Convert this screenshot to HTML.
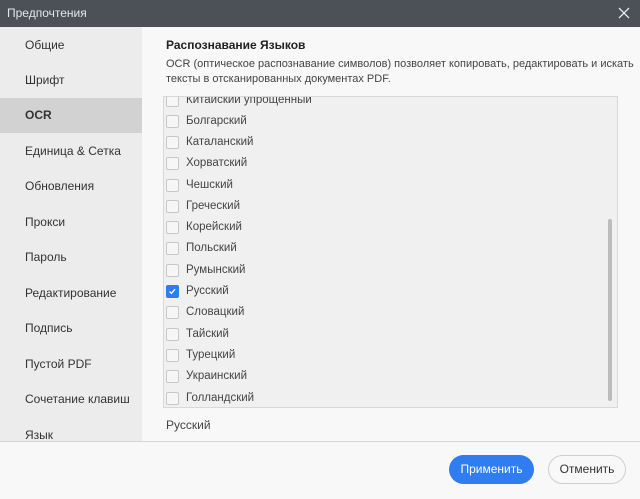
<!DOCTYPE html>
<html><head><meta charset="utf-8"><style>
*{margin:0;padding:0;box-sizing:border-box}
body{width:640px;height:499px;overflow:hidden;background:#f8f8f8;font-family:"Liberation Sans",sans-serif;color:#333;position:relative}
.title{position:absolute;left:0;top:0;width:640px;height:27px;background:#4c5158;color:#e4e6e8;font-size:12px;line-height:27px;padding-left:7px}
.x{position:absolute;right:10px;top:7px;width:12px;height:12px}
.side{position:absolute;left:0;top:27px;width:142px;height:414px;background:#ececec;overflow:hidden}
.si{position:absolute;left:0;width:142px;height:35px;font-size:12px;line-height:35px;padding-left:25px;color:#333}
.si.sel{background:#d2d2d2;font-weight:bold}
.h{position:absolute;left:166px;top:38px;font-size:12px;font-weight:bold;color:#222}
.d{position:absolute;left:166px;top:57px;font-size:11px;line-height:15px;color:#444;white-space:nowrap}
.box{position:absolute;left:163px;top:96px;width:455px;height:312px;background:#f0f0f0;border:1px solid #d8d8d8;overflow:hidden}
.it{position:absolute;left:0;height:21px;font-size:11.5px;line-height:21px;padding-left:22px;color:#444}
.cb{position:absolute;left:2px;top:4px;width:13px;height:13px;border:1px solid #c8c8cc;border-radius:2px;background:#f6f6f6}
.cb.on{background:#2d7cf0;border-color:#2d7cf0}
.sb{position:absolute;left:444px;top:122px;width:4px;height:182px;background:#bcbcbc;border-radius:2px}
.cur{position:absolute;left:166px;top:418px;font-size:12px;color:#444}
.foot{position:absolute;left:0;top:441px;width:640px;height:58px;background:#f8f8f8;border-top:1px solid #d4d4d4}
.b1{position:absolute;left:449px;top:455px;width:85px;height:29px;border-radius:15px;background:#2f7df0;color:#fff;font-size:12px;text-align:center;line-height:29px}
.b2{position:absolute;left:548px;top:455px;width:78px;height:29px;border-radius:15px;border:1px solid #cfcfcf;background:#f8f8f8;color:#333;font-size:12px;text-align:center;line-height:27px}
</style></head><body>
<div class="title">Предпочтения<svg class="x" viewBox="0 0 12 12"><path d="M1 1L11 11M11 1L1 11" stroke="#e4e6e8" stroke-width="1.3"/></svg></div>
<div class="side">
<div class="si" style="top:0.5px">Общие</div>
<div class="si" style="top:36px">Шрифт</div>
<div class="si sel" style="top:71px">OCR</div>
<div class="si" style="top:107px">Единица &amp; Сетка</div>
<div class="si" style="top:142px">Обновления</div>
<div class="si" style="top:178px">Прокси</div>
<div class="si" style="top:213px">Пароль</div>
<div class="si" style="top:249px">Редактирование</div>
<div class="si" style="top:284px">Подпись</div>
<div class="si" style="top:320px">Пустой PDF</div>
<div class="si" style="top:355px">Сочетание клавиш</div>
<div class="si" style="top:391px">Язык</div>
</div>
<div class="h">Распознавание Языков</div>
<div class="d">OCR (оптическое распознавание символов) позволяет копировать, редактировать и искать<br>тексты в отсканированных документах PDF.</div>
<div class="box">
<div class="it" style="top:-7px"><span class="cb"></span>Китайский упрощенный</div>
<div class="it" style="top:14px"><span class="cb"></span>Болгарский</div>
<div class="it" style="top:35px"><span class="cb"></span>Каталанский</div>
<div class="it" style="top:56px"><span class="cb"></span>Хорватский</div>
<div class="it" style="top:78px"><span class="cb"></span>Чешский</div>
<div class="it" style="top:99px"><span class="cb"></span>Греческий</div>
<div class="it" style="top:120px"><span class="cb"></span>Корейский</div>
<div class="it" style="top:141px"><span class="cb"></span>Польский</div>
<div class="it" style="top:163px"><span class="cb"></span>Румынский</div>
<div class="it" style="top:184px"><span class="cb on"><svg viewBox="0 0 13 13" width="11" height="11" style="position:absolute;left:0;top:0"><path d="M3 6.5L5.2 8.7L9.5 3.8" stroke="#fff" stroke-width="1.6" fill="none"/></svg></span>Русский</div>
<div class="it" style="top:205px"><span class="cb"></span>Словацкий</div>
<div class="it" style="top:227px"><span class="cb"></span>Тайский</div>
<div class="it" style="top:248px"><span class="cb"></span>Турецкий</div>
<div class="it" style="top:269px"><span class="cb"></span>Украинский</div>
<div class="it" style="top:291px"><span class="cb"></span>Голландский</div>
<div class="sb"></div>
</div>
<div class="cur">Русский</div>
<div class="foot"></div>
<div class="b1">Применить</div>
<div class="b2">Отменить</div>
</body></html>
